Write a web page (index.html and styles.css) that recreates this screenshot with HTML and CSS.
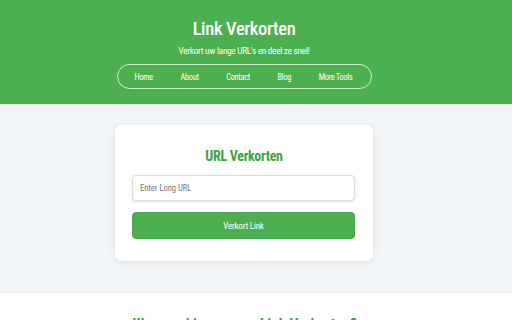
FILE: index.html
```html
<!DOCTYPE html>
<html lang="nl">
<head>
<meta charset="utf-8">
<title>Link Verkorten</title>
<link rel="stylesheet" href="styles.css">
</head>
<body>
<header class="site-header">
  <div class="inner">
    <h1 class="site-title">Link Verkorten</h1>
    <p class="tagline">Verkort uw lange URL's en deel ze snel!</p>
    <nav class="nav">
      <a href="#" class="nav-link">Home</a>
      <a href="#" class="nav-link">About</a>
      <a href="#" class="nav-link">Contact</a>
      <a href="#" class="nav-link">Blog</a>
      <a href="#" class="nav-link">More Tools</a>
    </nav>
  </div>
</header>
<main class="hero">
  <div class="inner">
    <section class="card">
      <h2 class="card-title">URL Verkorten</h2>
      <input class="url-input" type="text" placeholder="Enter Long URL">
      <button class="btn" type="button">Verkort Link</button>
    </section>
  </div>
</main>
<section class="why">
  <div class="inner">
    <h2 class="why-title">Waarom kiezen voor Link Verkorten?</h2>
  </div>
</section>
</body>
</html>
```
FILE: styles.css
```css
* { box-sizing: border-box; }
html, body { margin: 0; padding: 0; }
body {
  font-family: Roboto, "Liberation Sans", Arial, sans-serif;
  font-stretch: 75%;
  background: #ffffff;
  color: #333;
}
.inner {
  padding-right: 24px;
  display: flex;
  flex-direction: column;
  align-items: center;
}
.site-header {
  background: #4caf50;
  color: #fff;
  padding: 17px 0 15px;
}
.site-title {
  margin: 0;
  font-size: 18.5px;
  font-weight: 500;
  letter-spacing: -0.35px;
  line-height: 25px;
}
.tagline {
  margin: 3px 0 0;
  font-size: 9.3px;
  letter-spacing: -0.3px;
  line-height: 12px;
}
.nav {
  margin-top: 7px;
  display: flex;
  align-items: center;
  justify-content: space-between;
  height: 25px;
  width: 255px;
  padding: 0 18px 0 17px;
  border: 1px solid rgba(255,255,255,0.75);
  border-radius: 13px;
}
.nav-link {
  color: #fff;
  text-decoration: none;
  font-size: 8.4px;
  font-weight: 400;
  letter-spacing: -0.3px;
  white-space: nowrap;
}
.hero {
  background: #f1f5f8;
  padding: 21px 0 31px;
  border-bottom: 1px solid #eef0f2;
}
.card {
  width: 258px;
  background: #fff;
  border-radius: 7px;
  box-shadow: 0 2px 8px rgba(0,0,0,0.08);
  padding: 21px 17px 22px 17px;
  display: flex;
  flex-direction: column;
}
.card-title {
  margin: 0;
  text-align: center;
  color: #3aa23f;
  font-size: 14px;
  font-weight: 700;
  letter-spacing: -0.3px;
  line-height: 20px;
}
.url-input {
  margin-top: 9px;
  height: 26px;
  width: 223px;
  border: 1px solid #dcdcdc;
  border-radius: 4px;
  box-shadow: 0 1px 3px rgba(0,0,0,0.12);
  padding: 0 7px;
  font-family: inherit;
  font-stretch: 75%;
  font-size: 8.5px;
  color: #333;
  outline: none;
}
.url-input::placeholder { color: #777; }
.btn {
  margin-top: 11px;
  height: 27px;
  width: 223px;
  border: 1px solid #45a548;
  border-radius: 4px;
  background: #4caf50;
  color: #fff;
  font-family: inherit;
  font-stretch: 75%;
  font-size: 9px;
  font-weight: 400;
  letter-spacing: -0.2px;
}
.why {
  background: #fff;
  padding: 21px 0 30px;
}
.why-title {
  margin: 0 0 0 2px;
  color: #3aa23f;
  font-size: 15.3px;
  font-weight: 700;
  line-height: 20px;
}
```
